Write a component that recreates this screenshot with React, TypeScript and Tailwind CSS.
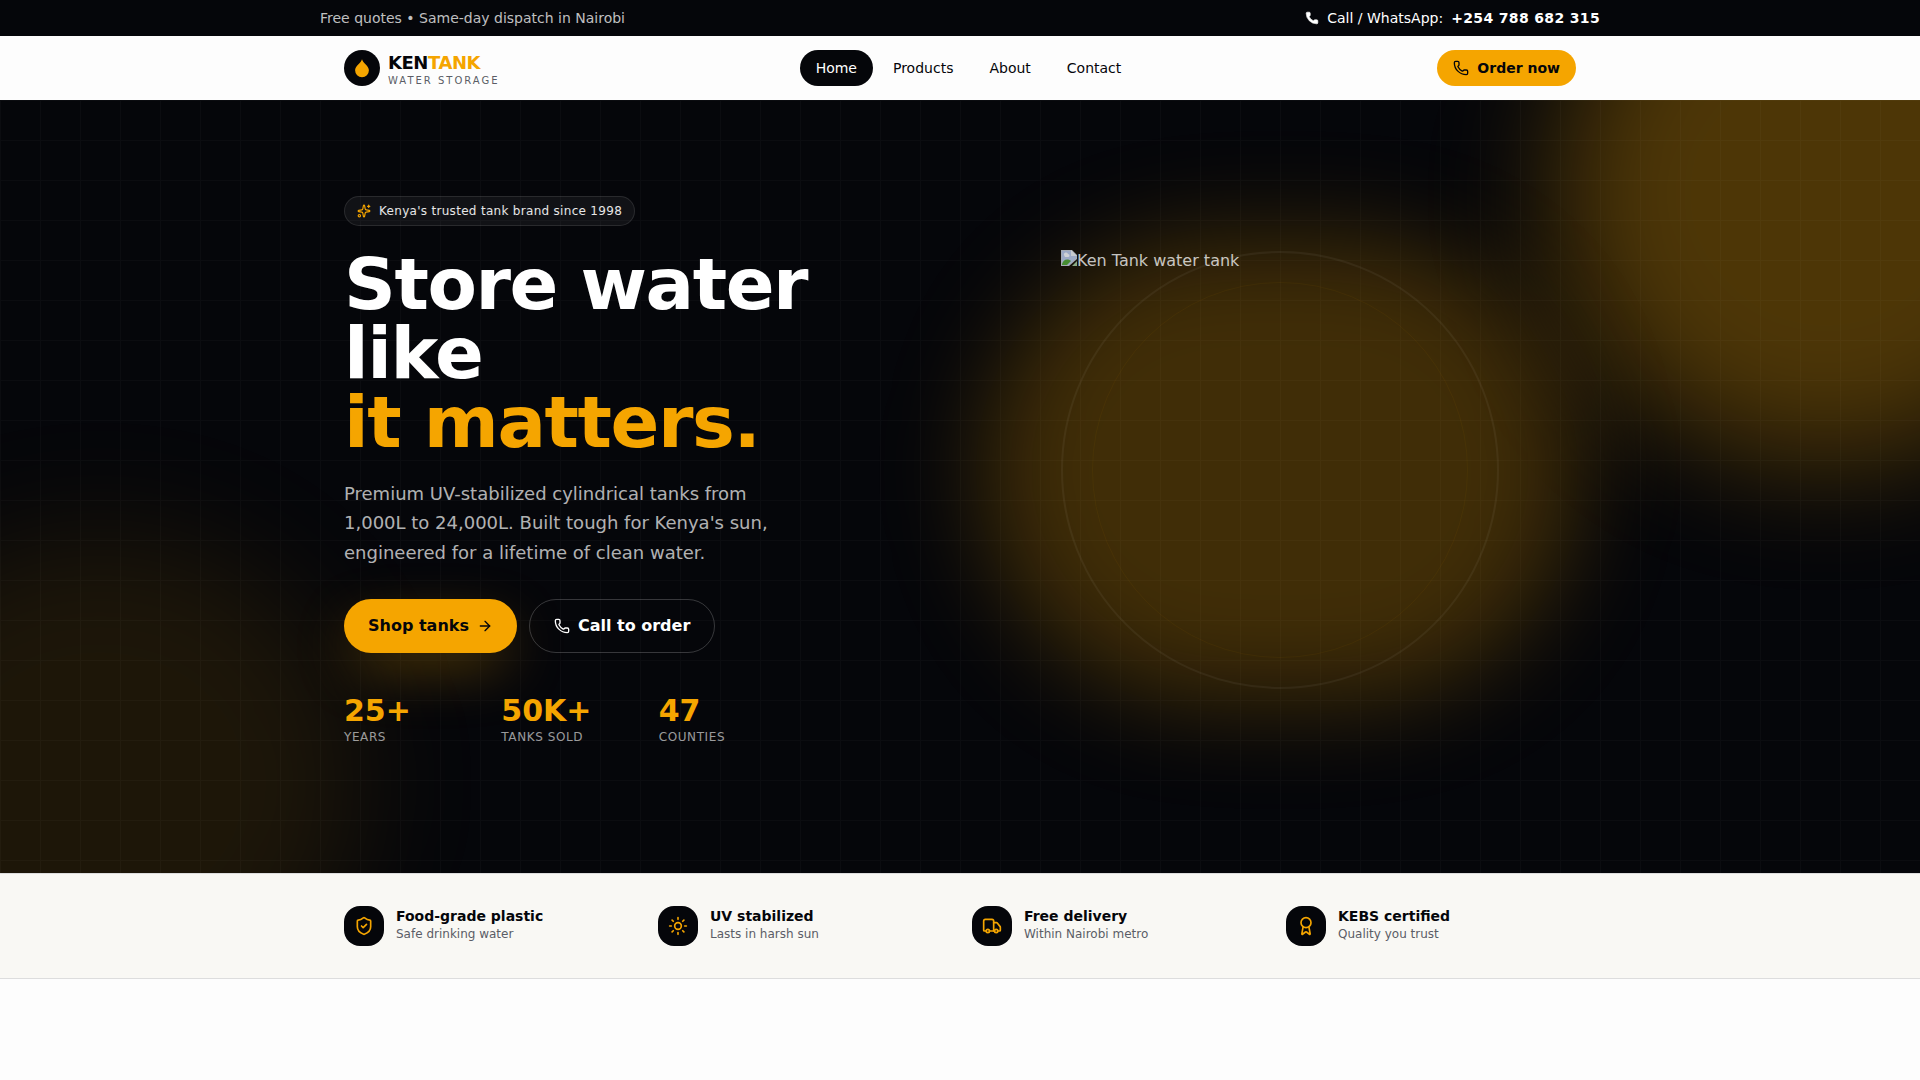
import { ArrowRight, Award, Phone, ShieldCheck, Sparkles, Sun, Truck } from 'lucide-react'

const navLinks = ['Home', 'Products', 'About', 'Contact']

const stats = [
  { value: '25+', label: 'Years' },
  { value: '50K+', label: 'Tanks sold' },
  { value: '47', label: 'Counties' },
]

const features = [
  { icon: ShieldCheck, title: 'Food-grade plastic', text: 'Safe drinking water' },
  { icon: Sun, title: 'UV stabilized', text: 'Lasts in harsh sun' },
  { icon: Truck, title: 'Free delivery', text: 'Within Nairobi metro' },
  { icon: Award, title: 'KEBS certified', text: 'Quality you trust' },
]

function TopBar() {
  return (
    <div className="bg-[#05060a] text-white text-sm">
      <div className="max-w-7xl mx-auto py-2 flex items-center justify-between">
        <span className="text-white/75">Free quotes • Same-day dispatch in Nairobi</span>
        <a href="tel:+254788682315" className="flex items-center gap-2">
          <Phone className="w-3.5 h-3.5" fill="currentColor" strokeWidth={1} />
          <span>Call / WhatsApp:</span>
          <span className="font-bold tracking-wide">+254 788 682 315</span>
        </a>
      </div>
    </div>
  )
}

function Logo() {
  return (
    <a href="#" className="flex items-center gap-2">
      <span className="w-9 h-9 rounded-full bg-[#05060a] flex items-center justify-center">
        <svg viewBox="0 0 24 24" className="w-5 h-5" fill="#f5a500">
          <path d="M12 1.500C11 6 3.700 9.500 3.700 14.800a8.300 8.300 0 0 0 16.600 0C20.300 9.500 13 6 12 1.500z" />
        </svg>
      </span>
      <span className="pt-1.5">
        <span className="block text-lg leading-5 font-extrabold tracking-tight">
          KEN<span className="text-[#f5a500]">TANK</span>
        </span>
        <span className="block text-[10px] leading-4 tracking-[0.2em] text-[#5b5d66]">WATER STORAGE</span>
      </span>
    </a>
  )
}

function Header() {
  return (
    <header className="bg-[#fdfdfd]">
      <div className="max-w-7xl mx-auto px-6 h-16 flex items-center justify-between">
        <Logo />
        <nav className="flex items-center gap-1 text-sm font-medium">
          {navLinks.map((link, i) => (
            <a
              key={link}
              href="#"
              className={i === 0 ? 'px-4 py-2 rounded-full bg-[#05060a] text-white' : 'px-4 py-2 rounded-full'}
            >
              {link}
            </a>
          ))}
        </nav>
        <a href="tel:+254788682315" className="flex items-center gap-2 px-4 py-2 rounded-full bg-[#f5a500] text-sm font-bold">
          <Phone className="w-4 h-4" />
          Order now
        </a>
      </div>
    </header>
  )
}

function TankPicture() {
  return (
    <div className="relative flex items-center justify-center">
      {/* soft glow behind the tank */}
      <div className="absolute w-full h-[464px] rounded-full bg-[#f5a500]/25 blur-[50px]" />
      <div className="absolute w-[438px] h-[438px] rounded-full border-2 border-white/5" />
      <div className="absolute w-[376px] h-[376px] rounded-full border border-[#f5a500]/5" />
      <figure className="relative w-[438px] h-[440px] flex items-start leading-[22px] text-white/75">
        <svg viewBox="0 0 16 16" className="w-4 h-4 opacity-85" aria-hidden="true">
          <path d="M0 0h11l5 5v4L8 16H0z" fill="#c0c8d4" />
          <path d="M1 1h9v5h5v2l-7 7H1z" fill="#b5c6e8" />
          <path d="M3 5a2 2 0 0 1 4-1 1.500 1.500 0 0 1 0 3H4z" fill="#f1f5fa" />
          <path d="M1 14c1-4 5-6 9-3l-4 4H1z" fill="#4fa33a" />
          <path d="M11 16l5-5v5z" fill="#9fc59a" />
          <path d="M10 0v6h6z" fill="#e6ebf2" />
        </svg>
        <figcaption>Ken Tank water tank</figcaption>
      </figure>
    </div>
  )
}

function Hero() {
  return (
    <section className="relative overflow-hidden bg-[#05060a] text-white">
      <div className="absolute -top-44 -right-44 w-[540px] h-[540px] rounded-full bg-[#f5a500]/30 blur-[60px]" />
      <div className="absolute -bottom-40 -left-40 w-[520px] h-[500px] rounded-full bg-[#f5a500]/10 blur-[60px]" />
      <div className="absolute inset-0 opacity-[0.025] bg-[linear-gradient(#fff_1px,transparent_1px),linear-gradient(90deg,#fff_1px,transparent_1px)] bg-[size:40px_40px]" />

      <div className="relative max-w-7xl mx-auto px-6 pt-24 pb-32 grid grid-cols-2 gap-12 items-center">
        <div>
          <div className="inline-flex items-center gap-2 align-top px-3 py-1.5 rounded-full border border-white/10 bg-white/5 text-xs tracking-wide text-white/90">
            <Sparkles className="w-3.5 h-3.5 text-[#f5a500]" />
            Kenya's trusted tank brand since 1998
          </div>

          <h1 className="mt-6 text-7xl leading-[69px] font-extrabold tracking-[-0.02em]">
            Store water like
            <br />
            <span className="text-[#f5a500]">it matters.</span>
          </h1>

          <p className="mt-[22px] max-w-md text-lg leading-relaxed text-white/70">
            Premium UV-stabilized cylindrical tanks from 1,000L to 24,000L. Built tough for Kenya's sun, engineered for
            a lifetime of clean water.
          </p>

          <div className="mt-8 flex gap-3 font-bold">
            <a
              href="#"
              className="flex items-center gap-2 px-6 rounded-full bg-[#f5a500] text-[#05060a] shadow-[0_20px_60px_-10px_rgba(245,165,0,0.4)]"
            >
              Shop tanks
              <ArrowRight className="w-4 h-4" />
            </a>
            <a href="tel:+254788682315" className="flex items-center gap-2 px-6 py-3.5 rounded-full border border-white/20">
              <Phone className="w-4 h-4" />
              Call to order
            </a>
          </div>

          <dl className="mt-10 max-w-md grid grid-cols-3 gap-6">
            {stats.map((stat) => (
              <div key={stat.label} className="flex flex-col-reverse">
                <dt className="text-xs uppercase tracking-wider text-white/60">{stat.label}</dt>
                <dd className="text-3xl font-extrabold text-[#f5a500]">{stat.value}</dd>
              </div>
            ))}
          </dl>
        </div>

        <TankPicture />
      </div>
    </section>
  )
}

function Features() {
  return (
    <section className="bg-[#f9f8f4] border-y border-[#dddddd]">
      <div className="max-w-7xl mx-auto px-6 py-8 grid grid-cols-4 gap-6">
        {features.map(({ icon: Icon, title, text }) => (
          <div key={title} className="flex items-start gap-3">
            <div className="w-10 h-10 rounded-2xl bg-[#05060a] text-[#f5a500] flex items-center justify-center">
              <Icon className="w-5 h-5" />
            </div>
            <div>
              <div className="text-sm font-bold">{title}</div>
              <div className="text-xs text-[#5b5d66]">{text}</div>
            </div>
          </div>
        ))}
      </div>
    </section>
  )
}

export default function App() {
  return (
    <div className="min-h-screen bg-[#fdfdfd] text-[#05060a] font-['DejaVu_Sans',sans-serif]">
      <TopBar />
      <Header />
      <Hero />
      <Features />
    </div>
  )
}
